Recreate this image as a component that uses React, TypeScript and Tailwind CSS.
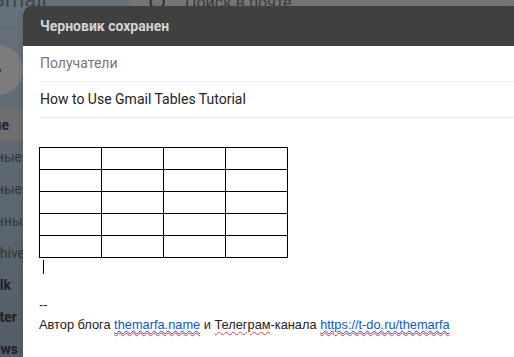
import React from "react";
import { Search } from "lucide-react";

const navItems = [
  { label: "Помеченные", width: "w-[22px]", bold: false },
  { label: "Отложенные", width: "w-[22px]", bold: false },
  { label: "Отправленные", width: "w-[30px]", bold: false },
  { label: "Archive", width: "w-[25px]", bold: false },
  { label: "Talk", width: "w-[11px]", bold: true },
  { label: "Twitter", width: "w-[17px]", bold: true },
  { label: "News", width: "w-[18px]", bold: true },
];

const rows = [0, 1, 2, 3, 4];
const cols = [0, 1, 2, 3];

const App: React.FC = () => {
  return (
    <div className="relative w-[514px] h-[357px] overflow-hidden bg-gradient-to-b from-[#67717c] to-[#545e69] font-['Roboto',sans-serif]">
      {/* Page header (dimmed behind the draft) */}
      <div className="flex h-[47px] -mt-[18px] border-b border-[#5d6772]">
        <div className="w-[129px] flex items-end pb-[15px]">
          <span className="-ml-[10px] text-[22px] leading-[26px] text-[#3e454c]">Gmail</span>
        </div>
        <div className="flex-1 h-[36px] bg-[#767676] rounded-l-lg flex items-center pl-[19px] gap-[17px]">
          <Search size={20} strokeWidth={2.5} className="text-[#2f2f2f] mt-[6px]" />
          <span className="text-[16px] text-[#3a3a3a] mt-[6px]">Поиск в почте</span>
        </div>
      </div>

      {/* Sidebar */}
      <div className="flex flex-col">
        <div className="mt-[16px] mb-[14px] h-[50px] w-[50px] -ml-[27px] rounded-full bg-[#7c7c7c] flex items-center justify-end pr-[22px]">
          <span className="w-[3px] h-[3px] rounded-full bg-[#2b2b2b]" />
        </div>
        <div className="h-[32px] w-[40px] bg-[#6f6f6f] flex items-center">
          <div className="w-[9px] flex justify-end">
            <span className="whitespace-nowrap text-[14px] font-bold text-[#1e2226]">Входящие</span>
          </div>
        </div>
        {navItems.map((item) => (
          <div key={item.label} className="h-[32px] flex items-center">
            <div className={`${item.width} flex justify-end`}>
              <span
                className={
                  item.bold
                    ? "whitespace-nowrap text-[14px] font-bold text-[#1d2126]"
                    : "whitespace-nowrap text-[14px] text-[#31373d]"
                }
              >
                {item.label}
              </span>
            </div>
          </div>
        ))}
      </div>

      {/* Draft window */}
      <div className="absolute left-[23px] top-[6px] right-0 bottom-0 bg-white rounded-tl-lg overflow-hidden shadow-[0_2px_6px_rgba(0,0,0,0.15)]">
        <div className="h-[40px] bg-[#404040] flex items-center px-[17px]">
          <span className="text-[14px] font-bold text-[#d4d4d4]">Черновик сохранен</span>
        </div>
        <div className="ml-[17px] h-[36px] border-b border-[#ececec] flex items-center">
          <span className="text-[14px] text-[#777777]">Получатели</span>
        </div>
        <div className="ml-[17px] h-[36px] border-b border-[#ececec] flex items-center">
          <span className="text-[14px] text-[#222222]">How to Use Gmail Tables Tutorial</span>
        </div>

        <div className="pl-[16px] pt-[29px] font-['Liberation_Sans',Arial,sans-serif] text-[12.8px] text-[#222222]">
          <div className="grid grid-cols-[repeat(4,62px)] w-fit border-t border-l border-black">
            {rows.map((r) =>
              cols.map((c) => (
                <div key={`${r}-${c}`} className="h-[22px] border-r border-b border-black" />
              ))
            )}
          </div>
          <div className="ml-[4px] mt-[2px] w-px h-[14px] bg-black" />
          <div className="mt-[21px] leading-[20px]">--</div>
          <div className="leading-[20px] whitespace-nowrap">
            Автор блога{" "}
            <span className="underline decoration-wavy decoration-[#e04040] decoration-[1px] underline-offset-[3px]">
              <a href="#" className="text-[#1155cc] underline decoration-[#1155cc] decoration-[1px] underline-offset-[1px]">
                themarfa.name
              </a>
            </span>{" "}
            и{" "}
            <span className="underline decoration-wavy decoration-[#e04040] decoration-[1px] underline-offset-[2px]">Телеграм</span>
            -канала{" "}
            <span className="underline decoration-wavy decoration-[#e04040] decoration-[1px] underline-offset-[3px]">
              <a href="#" className="text-[#1155cc] underline decoration-[#1155cc] decoration-[1px] underline-offset-[1px]">
                https://t-do.ru/themarfa
              </a>
            </span>
          </div>
        </div>
      </div>
    </div>
  );
};

export default App;
